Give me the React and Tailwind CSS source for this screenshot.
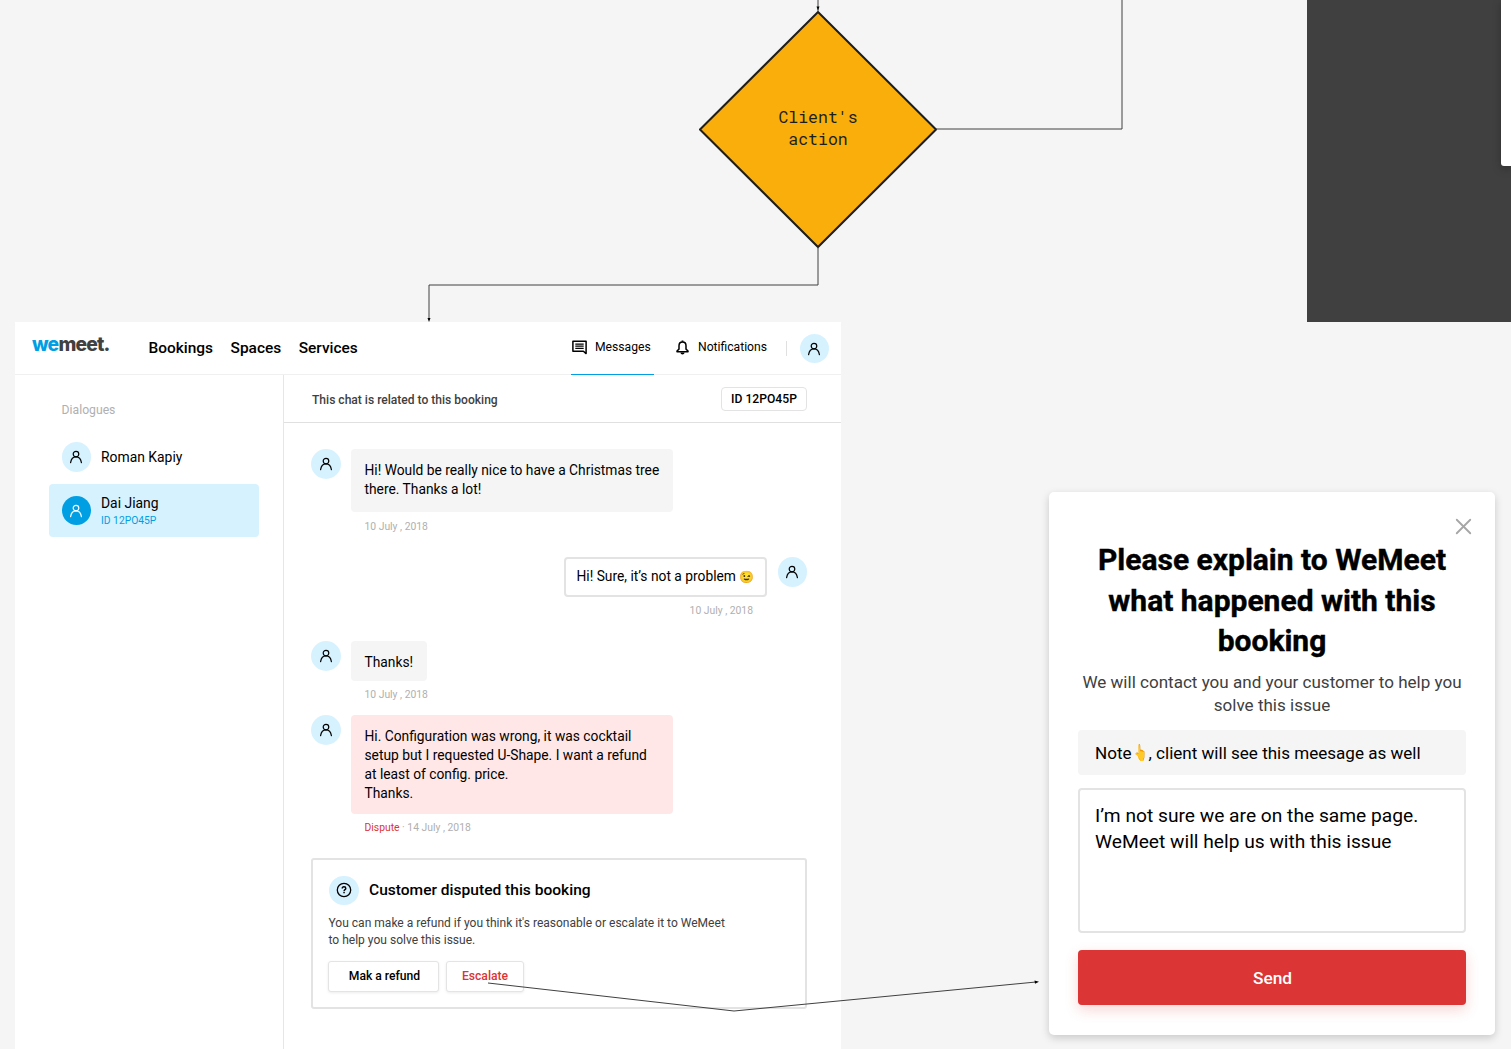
import { X } from "lucide-react";

function PersonIcon() {
  return (
    <svg viewBox="0 0 14 14" className="size-[14px]" fill="none" stroke="currentColor" strokeWidth="1.2" strokeLinecap="round">
      <circle cx="7" cy="4.1" r="2.8" />
      <path d="M1.6 12.6C2.1 9.300 4 6.900 7 6.900s4.900 2.400 5.400 5.700" />
    </svg>
  );
}

function Avatar({ active = false, children }) {
  return (
    <span
      className={
        active
          ? "flex size-[29.5px] shrink-0 items-center justify-center rounded-full bg-[#009fe3] text-white"
          : "flex size-[29.5px] shrink-0 items-center justify-center rounded-full bg-[#d7f2ff] text-black"
      }
    >
      {children || <PersonIcon />}
    </span>
  );
}

function MessageIcon() {
  return (
    <svg viewBox="0 0 15 15" className="h-[15px] w-[15px]" fill="none" stroke="#000" strokeWidth="1.5">
      <path d="M.9 1.2h13.2v12.4l-2.7-2.3H.9z" strokeLinejoin="round" />
      <path d="M3.3 4.1h8.4M3.3 6.2h8.4M3.3 8.4h8.4" strokeWidth="1.2" />
    </svg>
  );
}

function BellIcon() {
  return (
    <svg viewBox="0 0 13 15" className="h-[15px] w-[13px]" fill="none" stroke="#000" strokeWidth="1.5" strokeLinejoin="round">
      <path d="M6.5 2.100c-2.200 0-3.500 1.600-3.500 3.700v3.300L1 11v.7h11V11L10 9.100V5.800C10 3.700 8.700 2.100 6.500 2.100z" />
      <path d="M6.500 .5v1.300" strokeWidth="1.800" />
      <path d="M4.400 12.600h4.200c-.1 1.200-1 1.900-2.100 1.900s-2-.7-2.100-1.900z" fill="#000" stroke="none" />
    </svg>
  );
}

function QuestionIcon() {
  return (
    <svg viewBox="0 0 16 16" className="size-[16px]" fill="none" stroke="#000">
      <circle cx="8" cy="8" r="6.700" strokeWidth="1.300" />
      <path d="M6.200 6.600c0-1.100.8-1.800 1.800-1.800s1.800.7 1.800 1.600c0 1.200-1.700 1.300-1.700 2.500" strokeWidth="1.400" />
      <path d="M7.300 9.800h1.500v1.400H7.300z" fill="#000" stroke="none" />
    </svg>
  );
}

function Header() {
  return (
    <header className="flex h-[53px] shrink-0 items-stretch border-b border-[#f0f0f0] pr-[12px] pl-[17px]">
      <div className="w-[116.500px] pt-[9px] font-[Inter] text-[19.300px] leading-[26px] font-extrabold tracking-[-0.800px] text-[#414141]">
        <span className="text-[#009fe3]">we</span>meet.
      </div>
      <nav className="flex flex-1 items-center gap-[17.500px] pt-[2px] text-[15.450px] font-medium">
        <span>Bookings</span>
        <span>Spaces</span>
        <span>Services</span>
      </nav>
      <div className="mb-[-1px] flex w-[83px] items-center gap-[8px] border-b border-[#009fe3] pb-px pl-px text-[12.150px]">
        <MessageIcon />
        <span>Messages</span>
      </div>
      <div className="ml-[22.500px] flex items-center gap-[8.500px] pb-px text-[12.150px]">
        <BellIcon />
        <span>Notifications</span>
      </div>
      <div className="mt-[19px] mr-[13px] ml-[18.500px] h-[15px] w-px bg-[#e0e0e0]" />
      <div className="flex items-center pt-px">
        <Avatar />
      </div>
    </header>
  );
}

function Sidebar() {
  return (
    <aside className="w-[269px] shrink-0 border-r border-[#e6e6e6] pt-[26px] pr-[24px] pl-[34px]">
      <h2 className="pl-[12.600px] text-[12.200px] leading-[18px] text-[#b0b0b0]">Dialogues</h2>
      <div className="mt-[23px] flex items-center gap-[10px] pl-[12.500px] text-[13.900px]">
        <Avatar />
        <span className="pt-[2px]">Roman Kapiy</span>
      </div>
      <div className="mt-[12.500px] flex h-[53px] items-center gap-[10px] rounded-[4px] bg-[#d7f2ff] pl-[12.500px]">
        <Avatar active />
        <div className="flex flex-col pt-[3px]">
          <span className="text-[13.900px] leading-[17px]">Dai Jiang</span>
          <span className="text-[10.300px] leading-[17px] text-[#009fe3]">ID 12PO45P</span>
        </div>
      </div>
    </aside>
  );
}

function Stamp({ children }) {
  return <div className="px-[13.500px] text-[10.350px] leading-[14px] text-[#b0b0b0]">{children}</div>;
}

function Incoming({ bubble, lines, stamp, className }) {
  return (
    <div className={`flex items-start gap-[10.500px] ${className}`}>
      <Avatar />
      <div>
        <div className={`rounded-[4px] pl-[13.500px] text-[13.800px] leading-[19px] ${bubble}`}>
          {lines.map((line) => (
            <p key={line} className="whitespace-nowrap">{line}</p>
          ))}
        </div>
        {stamp}
      </div>
    </div>
  );
}

function DisputeCard() {
  return (
    <section className="mt-[24px] h-[151px] rounded-[3px] border-2 border-[#e3e3e3] px-[15px] pt-[15.500px]">
      <div className="ml-px flex items-center gap-[10.500px] text-[15.550px] font-medium">
        <Avatar>
          <QuestionIcon />
        </Avatar>
        <h3 className="pt-px">Customer disputed this booking</h3>
      </div>
      <p className="mt-[10px] pl-[.5px] text-[12.040px] leading-[17px] whitespace-nowrap text-[#404040]">
        You can make a refund if you think it's reasonable or escalate it to WeMeet
        <br />
        to help you solve this issue.
      </p>
      <div className="mt-[12px] flex gap-[7px] text-[12.150px] font-medium">
        <button className="h-[31px] w-[111px] rounded-[3px] border border-[#e4e4e4] bg-white pb-px pl-[2px] shadow-[0_1px_3px_rgba(0,0,0,0.08)]">
          Mak a refund
        </button>
        <button className="h-[31px] w-[78px] rounded-[3px] border border-[#e4e4e4] bg-white pb-px text-[#db3535] shadow-[0_1px_3px_rgba(0,0,0,0.08)]">
          Escalate
        </button>
      </div>
    </section>
  );
}

function Chat() {
  return (
    <main className="flex flex-1 flex-col">
      <div className="flex h-[48px] shrink-0 items-center justify-between border-b border-[#e0e0e0] pt-px pr-[34px] pl-[28px]">
        <span className="pt-[2px] text-[12.070px] font-medium text-[#404040]">This chat is related to this booking</span>
        <span className="flex h-[24px] w-[86px] items-center justify-center rounded-[4px] border border-[#e3e3e3] text-[12.150px] font-medium">
          ID 12PO45P
        </span>
      </div>
      <div className="flex flex-col pt-[26px] pr-[34px] pl-[27px]">
        <Incoming
          className="h-[108px]"
          bubble="h-[63px] w-[322px] bg-[#f5f5f5] pt-[12px]"
          lines={["Hi! Would be really nice to have a Christmas tree", "there. Thanks a lot!"]}
          stamp={<div className="mt-[8px]"><Stamp>10 July , 2018</Stamp></div>}
        />
        <div className="flex h-[84px] items-start justify-end gap-[11px]">
          <div className="flex flex-col items-end">
            <div className="flex h-[40px] w-[203px] items-center rounded-[4px] border-2 border-[#e3e3e3] pb-px pl-[11px] text-[13.800px] whitespace-nowrap">
              Hi! Sure, it’s not a problem&nbsp;<span className="text-[12px]">😉</span>
            </div>
            <div className="mt-[6.500px]"><Stamp>10 July , 2018</Stamp></div>
          </div>
          <Avatar />
        </div>
        <Incoming
          className="h-[74px]"
          bubble="h-[40px] w-[76px] bg-[#f5f5f5] pt-[12px]"
          lines={["Thanks!"]}
          stamp={<div className="mt-[7px]"><Stamp>10 July , 2018</Stamp></div>}
        />
        <Incoming
          className="h-[119px]"
          bubble="h-[98.500px] w-[322px] bg-[#ffe7e7] pt-[12px]"
          lines={[
            "Hi. Configuration was wrong, it was cocktail",
            "setup but I requested U-Shape. I want a refund",
            "at least of config. price.",
            "Thanks.",
          ]}
          stamp={<div className="mt-[7px]"><Stamp><span className="text-[#db3535]">Dispute</span> · 14 July , 2018</Stamp></div>}
        />
        <DisputeCard />
      </div>
    </main>
  );
}

function ExplainModal() {
  return (
    <section className="absolute top-[492px] left-[1049px] flex h-[543px] w-[446px] flex-col rounded-[5px] bg-white px-[29px] shadow-[0_3px_8px_rgba(0,0,0,0.18)]">
      <div className="mr-[-11px] flex h-[48px] items-end justify-end">
        <X className="size-[27px] text-[#a6a6a6]" strokeWidth={1.6} />
      </div>
      <h1 className="text-center text-[30px] leading-[40.500px] font-bold whitespace-nowrap [-webkit-text-stroke:0.4px_#000]">
        Please explain to WeMeet
        <br />
        what happened with this
        <br />
        booking
      </h1>
      <p className="mt-[9px] text-center text-[17.060px] leading-[23.500px] whitespace-nowrap text-[#404040]">
        We will contact you and your customer to help you
        <br />
        solve this issue
      </p>
      <div className="mt-[12px] flex h-[45px] shrink-0 items-center rounded-[4px] bg-[#f5f5f5] pt-[4px] pl-[17px] text-[17.060px]">
        <span>Note</span>
        <span className="flex w-[17px] justify-center pb-[3px]">
          <span className="scale-x-[0.65] text-[16px]">👆</span>
        </span>
        <span>, client will see this meesage as well</span>
      </div>
      <div className="mt-[13px] h-[145px] shrink-0 rounded-[4px] border-2 border-[#e3e3e3] pt-[13px] pl-[15px] text-[19.200px] leading-[26px] whitespace-nowrap">
        I’m not sure we are on the same page.
        <br />
        WeMeet will help us with this issue
      </div>
      <button className="mt-[17px] h-[55px] shrink-0 rounded-[4px] bg-[#db3535] pt-[3px] pl-px text-[17.300px] font-medium text-white shadow-[0_5px_14px_rgba(219,53,53,0.2)]">
        Send
      </button>
    </section>
  );
}

function Decision() {
  return (
    <div className="absolute top-[11px] left-[699px] flex size-[238px] items-center justify-center">
      <svg viewBox="0 0 238 238" className="absolute inset-0 size-full">
        <path d="M119 1 L237 118.500 L119 236 L1 118.500 Z" fill="#faae0b" stroke="#1e1e1e" strokeWidth="2" />
      </svg>
      <p className="relative pb-[4px] text-center font-['Roboto_Mono'] text-[16.500px] leading-[22px] text-[#1e1e1e]">
        Client's
        <br />
        action
      </p>
    </div>
  );
}

function Connectors() {
  return (
    <svg viewBox="0 0 1511 1049" className="pointer-events-none absolute inset-0 h-[1049px] w-[1511px]" fill="none" stroke="#404040" strokeWidth="1">
      <path d="M818 0V11M818 247V285H429V320M936 129H1122V0M488 983L734 1011L1036 982" />
      <path d="M816.500 6.500h3L818 10.500zM427.500 318h3L429 322zM1034.500 980.500L1039 981.700L1035 983.800z" fill="#000" stroke="none" />
    </svg>
  );
}

export default function App() {
  return (
    <div className="relative h-[1049px] w-[1511px] overflow-hidden bg-[#f5f5f5] font-[Roboto,sans-serif] text-black">
      <div className="absolute top-0 left-[1307px] h-[322px] w-[204px] overflow-hidden bg-[#404040]">
        <div className="ml-auto h-[166px] w-[10px] rounded-bl-[3px] bg-white shadow-[0_3px_8px_rgba(0,0,0,0.25)]" />
      </div>
      <div className="absolute top-[322px] left-[15px] flex h-[727px] w-[826px] flex-col bg-white">
        <Header />
        <div className="flex flex-1">
          <Sidebar />
          <Chat />
        </div>
      </div>
      <ExplainModal />
      <Decision />
      <Connectors />
    </div>
  );
}
